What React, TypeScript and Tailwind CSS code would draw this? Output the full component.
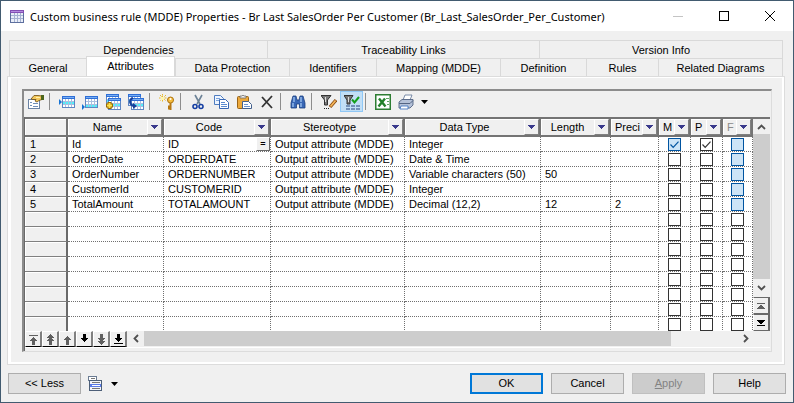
import React from 'react';

const attributes = [
  { name: 'Id', code: 'ID', type: 'Integer', length: '', precision: '', m: true, p: true },
  { name: 'OrderDate', code: 'ORDERDATE', type: 'Date & Time', length: '', precision: '', m: false, p: false },
  { name: 'OrderNumber', code: 'ORDERNUMBER', type: 'Variable characters (50)', length: '50', precision: '', m: false, p: false },
  { name: 'CustomerId', code: 'CUSTOMERID', type: 'Integer', length: '', precision: '', m: false, p: false },
  { name: 'TotalAmount', code: 'TOTALAMOUNT', type: 'Decimal (12,2)', length: '12', precision: '2', m: false, p: false },
];
const emptyRows = [6, 7, 8, 9, 10, 11, 12, 13];

const cellBase = 'h-[15px] overflow-hidden whitespace-nowrap border-r border-b border-dotted border-[#707070]';
const cell = `${cellBase} p-0 pl-1`;
const checkCell = `${cellBase} px-1 pt-px pb-0`;
const rowHead =
  'h-[15px] border-r-2 border-b border-r-[#696969] border-b-[#808080] bg-[#f0f0f0] p-0 pl-[5px] text-left font-normal shadow-[inset_1px_1px_0_#fff]';

function Icon({ label, children }: { label: string; children: React.ReactNode }) {
  return (
    <svg width="16" height="16" viewBox="0 0 16 16" role="img" aria-label={label} className="shrink-0">
      {children}
    </svg>
  );
}

function Table({ x, y, row }: { x: number; y: number; row: number }) {
  return (
    <g transform={`translate(${x} ${y})`} shapeRendering="crispEdges">
      <rect width="13" height="12" fill="#5f86c2" />
      <rect width="13" height="3" fill="#2f6fd6" />
      <rect x="1" y="1" width="11" height="1" fill="#76aef5" />
      {[0, 1, 2].map((r) =>
        [0, 1, 2, 3].map((c) => (
          <rect key={`${r}-${c}`} x={1 + c * 3} y={3 + r * 3} width="2" height="2" fill={r === row ? '#4ff0fa' : '#fff'} />
        )),
      )}
      <path d="M3.5 3v8M6.5 3v8M9.5 3v8M1 5.5h11M1 8.5h11" stroke="#a9bfdf" />
    </g>
  );
}

function ToolButton({ label, active, children }: { label: string; active?: boolean; children: React.ReactNode }) {
  return (
    <button
      type="button"
      aria-pressed={active}
      className={`flex h-[21px] w-[23px] items-center justify-center ${active ? 'border border-[#90c8f6] bg-[#c2dff6]' : ''}`}
    >
      <Icon label={label}>{children}</Icon>
    </button>
  );
}

function Separator() {
  return <div className="h-[21px] w-2 py-[2px] pl-[2px]"><div className="h-full w-px bg-[#8d8d8d]" /></div>;
}

function HeaderCell({ label, muted, narrow }: { label: string; muted?: boolean; narrow?: boolean }) {
  return (
    <th scope="col" className="h-5 border-y-2 border-r-2 border-[#747474] bg-[#f0f0f0] p-0 font-normal shadow-[inset_1px_1px_0_#fff]">
      <div className="flex h-4 items-center overflow-hidden">
        <span className={`flex-1 overflow-hidden whitespace-nowrap ${narrow ? 'pl-1 text-left' : 'text-center'} ${muted ? 'text-[#8a8a8a]' : ''}`}>
          {label}
        </span>
        <button
          type="button"
          aria-label={`Filter ${label}`}
          className="flex h-4 w-[15px] shrink-0 items-center justify-center border border-t-white border-r-[#808080] border-b-[#808080] border-l-white bg-[#f0f0f0]"
        >
          <svg width="7" height="4" viewBox="0 0 7 4" shapeRendering="crispEdges">
            <path d="M0 0h7v1H6v1H5v1H4v1H3V3H2V2H1V1H0z" fill="#3a3a8c" />
          </svg>
        </button>
      </div>
    </th>
  );
}

function Check({ label, checked, blue }: { label: string; checked?: boolean; blue?: boolean }) {
  return (
    <span className="relative mx-auto block h-[13px] w-[13px]">
      <input
        type="checkbox"
        aria-label={label}
        defaultChecked={checked}
        className={`block h-[13px] w-[13px] appearance-none border ${blue ? 'border-[#0054a0] bg-[#cce4f7]' : 'border-[#333] bg-white'}`}
      />
      {checked && (
        <svg width="13" height="13" viewBox="0 0 13 13" className="pointer-events-none absolute inset-0">
          <path d="M2.5 6.5l2.7 2.8 5.3-5.6" fill="none" stroke={blue ? '#0054a0' : '#333'} strokeWidth="1.2" />
        </svg>
      )}
    </span>
  );
}

function NavButton({ label, d, dark }: { label: string; d: string; dark?: boolean }) {
  return (
    <button
      type="button"
      aria-label={label}
      className="flex h-[16px] w-[17px] items-center justify-center border-t border-r-2 border-b border-l border-t-white border-r-[#808080] border-b-black border-l-white bg-[#f0f0f0]"
    >
      <svg width="11" height="11" viewBox="0 0 11 11" shapeRendering="crispEdges">
        <path d={d} fill={dark ? '#000' : '#606060'} />
      </svg>
    </button>
  );
}

function PageButton({ label, d, dark }: { label: string; d: string; dark?: boolean }) {
  return (
    <button
      type="button"
      aria-label={label}
      className="flex h-[17px] items-center justify-center border-t border-r-2 border-b border-l border-t-[#696969] border-r-[#696969] border-b-[#696969] border-l-white bg-[#f0f0f0]"
    >
      <svg width="8" height="6" viewBox="0 0 8 6" shapeRendering="crispEdges">
        <path d={d} fill={dark ? '#000' : '#606060'} />
      </svg>
    </button>
  );
}

function TabButton({ label, active }: { label: string; active?: boolean }) {
  return (
    <button
      type="button"
      role="tab"
      aria-selected={!!active}
      className={`whitespace-nowrap border-t border-l border-[#d9d9d9] text-center ${
        active ? '-mt-[2px] -mb-px border-r bg-white pb-[2px]' : 'bg-[#f0f0f0] pt-[2px]'
      }`}
    >
      {label}
    </button>
  );
}

function DialogButton({ children, kind = 'normal' }: { children: React.ReactNode; kind?: 'normal' | 'primary' | 'disabled' }) {
  const look = {
    normal: 'border border-[#adadad] bg-[#e1e1e1]',
    primary: 'border-2 border-[#0078d7] bg-[#e1e1e1]',
    disabled: 'border border-[#bfbfbf] bg-[#cccccc] text-[#838383]',
  }[kind];
  return (
    <button type="button" disabled={kind === 'disabled'} className={`h-[21px] w-[73px] ${look}`}>
      {children}
    </button>
  );
}

export default function App() {
  return (
    <main className="flex min-h-screen flex-col border border-[#425b70] bg-[#f0f0f0] font-['Liberation_Sans',Arial,sans-serif] text-[11px] leading-[13px] text-black">
      <header className="flex h-[30px] items-center bg-white pl-[9px]">
        <svg width="14" height="13" viewBox="0 0 14 13" shapeRendering="crispEdges" className="shrink-0" aria-hidden="true">
          <rect width="14" height="13" fill="#5d6f9e" />
          <rect width="14" height="3" fill="#8350b4" />
          <rect x="1" y="1" width="12" height="1" fill="#b48ae0" />
          <rect x="1" y="3" width="12" height="9" fill="#e9eef8" />
          <path d="M4.5 3v9M7.5 3v9M10.5 3v9M1 5.5h12M1 8.5h12" stroke="#a5b2d2" />
        </svg>
        <h1 className="ml-[6px] flex-1 whitespace-nowrap font-['Noto_Sans','Open_Sans',sans-serif] text-[11px]">
          Custom business rule (MDDE) Properties - Br Last SalesOrder Per Customer (Br_Last_SalesOrder_Per_Customer)
        </h1>
        <div className="flex shrink-0">
          <button type="button" aria-label="Minimize" className="flex h-[29px] w-[46px] items-center justify-center">
            <svg width="10" height="10"><path d="M0 5.5h10" stroke="#c4c4c4" /></svg>
          </button>
          <button type="button" aria-label="Maximize" className="flex h-[29px] w-[46px] items-center justify-center">
            <svg width="10" height="10"><rect x=".5" y=".5" width="9" height="9" fill="none" stroke="#000" /></svg>
          </button>
          <button type="button" aria-label="Close" className="flex h-[29px] w-[46px] items-center justify-center">
            <svg width="10" height="10"><path d="M0 0l10 10M10 0L0 10" stroke="#000" /></svg>
          </button>
        </div>
      </header>

      <div role="tablist" className="mt-[9px] mr-[10px] ml-2 flex flex-col border-r border-[#d9d9d9]">
        <div className="grid h-[18px] grid-cols-[258fr_272fr_243fr]">
          <TabButton label="Dependencies" />
          <TabButton label="Traceability Links" />
          <TabButton label="Version Info" />
        </div>
        <div className="grid h-[18px] grid-cols-[77fr_89fr_114fr_87fr_124fr_86fr_72fr_124fr]">
          <TabButton label="General" />
          <TabButton label="Attributes" active />
          <TabButton label="Data Protection" />
          <TabButton label="Identifiers" />
          <TabButton label="Mapping (MDDE)" />
          <TabButton label="Definition" />
          <TabButton label="Rules" />
          <TabButton label="Related Diagrams" />
        </div>
      </div>

      <section className="mr-2 ml-[6px] flex flex-1 flex-col border border-[#dcdcdc] bg-white p-[2px] pt-px pl-[3px]">
        <div className="flex flex-1 flex-col bg-[#f0f0f0] pt-[11px] pr-[10px] pb-[10px] pl-[11px]">
          <div className="flex flex-1 flex-col border-t-2 border-r border-b border-l-2 border-t-[#8c8c8c] border-r-[#dcdcdc] border-b-[#dcdcdc] border-l-[#8c8c8c]">
            <div role="toolbar" className="flex h-[26px] items-start">
              <ToolButton label="Properties">
                <rect x=".5" y="5.5" width="11" height="9" fill="#fff" stroke="#6b84a5" />
                <path d="M2 8.500h2M5 9.500h5M2 11.500h2M5 12.500h5" stroke="#6f8fb8" />
                <path d="M3 5l3-3.500h4l4 .5v3.500l-3 1-2 1.500-2-1 1-1.500H5z" fill="#f4c95c" stroke="#6b4b12" strokeWidth=".8" />
                <path d="M13 1h3v5h-3z" fill="#4d661c" />
                <path d="M8 3.500h4" stroke="#fff0b0" />
              </ToolButton>
              <Separator />
              <ToolButton label="Insert a Row">
                <Table x={3} y={2} row={1} />
                <path d="M0 5l3 3-3 3z" fill="#1673d4" />
              </ToolButton>
              <ToolButton label="Add a Row">
                <Table x={3} y={2} row={2} />
                <path d="M0 10l3 3-3 3z" fill="#1673d4" />
              </ToolButton>
              <ToolButton label="Add Objects">
                <Table x={1} y={0} row={1} />
                <Table x={3} y={4} row={1} />
                <path d="M4.500 8v7M1 11.500h7" stroke="#9a6d00" strokeWidth="4" />
                <path d="M4.500 9v5M2 11.500h5" stroke="#ffe34a" strokeWidth="2" />
              </ToolButton>
              <ToolButton label="Replace Objects">
                <Table x={0} y={0} row={1} />
                <Table x={3} y={4} row={1} />
                <path d="M5 4C1 5 1 11 6 12" fill="none" stroke="#153f9b" strokeWidth="2" />
                <path d="M5 9l4 3-4 3z" fill="#153f9b" />
              </ToolButton>
              <Separator />
              <ToolButton label="Create Key">
                <path d="M3.500 0v8M0 4h8M1 1l6 6M7 1L1 7" stroke="#e8b92c" strokeDasharray="1.500 .5" />
                <rect x="2" y="3" width="3" height="3" fill="#fff6b0" />
                <path d="M11.500 9v7M12 12.500h-3M12 14.500h-3" stroke="#b87913" strokeWidth="2" />
                <circle cx="11.500" cy="6" r="3" fill="#f6bd3c" stroke="#ad7310" />
                <circle cx="11.500" cy="5" r="1" fill="#fff" />
              </ToolButton>
              <Separator />
              <ToolButton label="Cut">
                <path d="M5 1l5 9M12 1l-5 9" stroke="#6d8397" strokeWidth="1.600" />
                <circle cx="5" cy="12.500" r="2" fill="none" stroke="#163fa3" strokeWidth="1.600" />
                <circle cx="11" cy="12.500" r="2" fill="none" stroke="#163fa3" strokeWidth="1.600" />
              </ToolButton>
              <ToolButton label="Copy">
                <path d="M1.500 1.500h6l3 3v6h-9z" fill="#eef5ff" stroke="#4f7dc0" />
                <path d="M3 4.500h4M3 6.500h4" stroke="#7aa3db" />
                <path d="M6.500 5.500h6l3 3v6h-9z" fill="#fff" stroke="#3766b3" />
                <path d="M8 8.500h4M8 10.500h6M8 12.500h6" stroke="#5b8bd0" />
              </ToolButton>
              <ToolButton label="Paste">
                <rect x="1.500" y="2.500" width="11" height="12" rx="1" fill="#eda93b" stroke="#9a6416" />
                <path d="M4 4V2h2l1-1 1 1h2v2z" fill="#eee" stroke="#6d6d6d" strokeWidth=".8" />
                <path d="M6.500 7.500h6l3 3v4h-9z" fill="#fff" stroke="#44618d" />
                <path d="M8 10.500h4M8 12.500h6" stroke="#6c93cd" />
              </ToolButton>
              <ToolButton label="Delete">
                <path d="M3 3l10 11M13 2L3 13" fill="none" stroke="#333" strokeWidth="1.800" />
              </ToolButton>
              <Separator />
              <ToolButton label="Find">
                <path d="M3 2h3l1 4h2l1-4h3l2 7v5H9.500v-4h-3v4H1V9z" fill="#3866b5" stroke="#1b3f80" strokeWidth=".8" />
                <path d="M4 3v5M11 3v5M3 9v4M11 9v4" stroke="#a9cdf7" strokeWidth="1.200" />
              </ToolButton>
              <Separator />
              <ToolButton label="Customize Filter">
                <path d="M0 1.500h10L6.500 6v5h-3V6z" fill="#777" stroke="#333" />
                <path d="M4.500 3v5" stroke="#ddd" />
                <path d="M9 13l6-7" stroke="#8a4b13" strokeWidth="3.400" />
                <path d="M9.500 12.500l5-6" stroke="#f4b65a" strokeWidth="1.800" />
                <path d="M3 14.500h1M5 14.500h1M7 14.500h1" stroke="#222" />
              </ToolButton>
              <ToolButton label="Enable Filter" active>
                <path d="M0 1.500h9L6 6v4H3V6z" fill="#777" stroke="#333" />
                <path d="M4.500 3v5" stroke="#ddd" />
                <path d="M8 5.500l2.500 3L15 3" fill="none" stroke="#13a01b" strokeWidth="2" />
                <path d="M2 12h4M7 12h4M12 12h4M2 15h4M7 15h4M12 15h4" stroke="#27457a" strokeWidth="1.200" />
              </ToolButton>
              <Separator />
              <ToolButton label="Export to Excel">
                <rect x=".75" y=".75" width="14.500" height="14.500" fill="#fff" stroke="#2d7d32" strokeWidth="1.500" />
                <path d="M4 4.500l6.500 8M10 4.500l-6.500 8" stroke="#23802b" strokeWidth="2.400" />
                <path d="M11 4.500h3M12 7.500h2M12 10.500h2" stroke="#5ba35f" />
              </ToolButton>
              <ToolButton label="Print">
                <path d="M5 6l2-5h7l-2 5z" fill="#fff" stroke="#6b7f9e" strokeWidth=".9" />
                <path d="M1 8l3-2.500h11V11l-3 3H1z" fill="#b4c1d8" stroke="#536483" strokeWidth=".9" />
                <path d="M1 9.500h11l3-3" fill="none" stroke="#536483" />
                <path d="M3 12h7v3H2z" fill="#fff" stroke="#4679c4" strokeWidth=".9" />
              </ToolButton>
              <button type="button" aria-label="Print options" className="flex h-[21px] w-[15px] items-center justify-center">
                <svg width="7" height="4"><path d="M0 0h7L3.500 4z" fill="#000" /></svg>
              </button>
            </div>

            <div className="flex flex-1 flex-col border-l border-[#696969] pr-px">
              <div className="flex">
                <div className="h-[214px] min-w-0 flex-1 overflow-hidden bg-white">
                  <table className="w-full table-fixed border-separate border-spacing-0">
                    <colgroup>
                      <col className="w-[43px]" />
                      <col className="w-[96px]" />
                      <col className="w-[107px]" />
                      <col className="w-[134px]" />
                      <col className="w-[136px]" />
                      <col className="w-[70px]" />
                      <col className="w-[48px]" />
                      <col className="w-[32px]" />
                      <col className="w-[32px]" />
                      <col />
                    </colgroup>
                    <thead>
                      <tr>
                        <th className="h-5 border-y-2 border-r-2 border-[#747474] bg-[#f0f0f0] p-0 shadow-[inset_1px_1px_0_#fff]" />
                        <HeaderCell label="Name" />
                        <HeaderCell label="Code" />
                        <HeaderCell label="Stereotype" />
                        <HeaderCell label="Data Type" />
                        <HeaderCell label="Length" />
                        <HeaderCell label="Preci" narrow />
                        <HeaderCell label="M" narrow />
                        <HeaderCell label="P" narrow />
                        <HeaderCell label="F" narrow muted />
                      </tr>
                    </thead>
                    <tbody>
                      {attributes.map((a, i) => (
                        <tr key={a.name}>
                          <th scope="row" className={rowHead}>{i + 1}</th>
                          <td className={cell}>{a.name}</td>
                          <td className={cell}>
                            <div className="flex h-[14px] items-center justify-between">
                              {a.code}
                              {i === 0 && (
                                <button
                                  type="button"
                                  className="h-[14px] w-[14px] border border-t-white border-r-[#696969] border-b-[#696969] border-l-white bg-[#f0f0f0] text-[9px] leading-[11px] font-bold"
                                >
                                  =
                                </button>
                              )}
                            </div>
                          </td>
                          <td className={cell}>Output attribute (MDDE)</td>
                          <td className={cell}>{a.type}</td>
                          <td className={cell}>{a.length}</td>
                          <td className={cell}>{a.precision}</td>
                          <td className={checkCell}><Check label={`Mandatory ${a.name}`} checked={a.m} blue={a.m} /></td>
                          <td className={checkCell}><Check label={`Primary ${a.name}`} checked={a.p} /></td>
                          <td className={checkCell}><Check label={`Foreign ${a.name}`} blue /></td>
                        </tr>
                      ))}
                      {emptyRows.map((n) => (
                        <tr key={n}>
                          <th scope="row" className={rowHead} />
                          <td className={cell} />
                          <td className={cell} />
                          <td className={cell} />
                          <td className={cell} />
                          <td className={cell} />
                          <td className={cell} />
                          <td className={checkCell}><Check label={`Mandatory row ${n}`} /></td>
                          <td className={checkCell}><Check label={`Primary row ${n}`} /></td>
                          <td className={checkCell}><Check label={`Foreign row ${n}`} /></td>
                        </tr>
                      ))}
                    </tbody>
                  </table>
                </div>
                <div className="flex w-[17px] flex-col border-t-2 border-[#747474] bg-[#f0f0f0]">
                  <button type="button" aria-label="Scroll up" className="flex h-[15px] items-center justify-center">
                    <svg width="9" height="6"><path d="M1 5l3.500-3.500L8 5" fill="none" stroke="#505050" strokeWidth="1.800" /></svg>
                  </button>
                  <div className="flex-1 bg-[#cdcdcd]" />
                  <button type="button" aria-label="Scroll down" className="flex h-[18px] items-center justify-center">
                    <svg width="9" height="6"><path d="M1 1l3.500 3.500L8 1" fill="none" stroke="#505050" strokeWidth="1.800" /></svg>
                  </button>
                  <PageButton label="First page" d="M0 0h8v1H0zM3 2h2v1h1v1h1v1h1v1H0V5h1V4h1V3h1z" />
                  <PageButton label="Last page" d="M0 0h8v1H7v1H6v1H5v1H3V3H2V2H1V1H0zM0 5h8v1H0z" dark />
                </div>
              </div>
              <div className="flex h-4 bg-[#f0f0f0]">
                <NavButton label="Move to top" d="M1 1h9v1H1zM5 3h1v1h1v1h1v1h1v1H7v4H4V7H2V6h1V5h1V4h1z" />
                <NavButton label="Move up a page" d="M5 0h1v1h1v1h1v1h1v1H7v1h1v1h1v1H7v4H4V7H2V6h1V5h1V4H2V3h1V2h1V1h1z" />
                <NavButton label="Move up" d="M5 2h1v1h1v1h1v1h1v1H7v5H4V6H2V5h1V4h1V3h1z" />
                <NavButton label="Move down" d="M4 0h3v4h2v1H8v1H7v1H6v1H5V7H4V6H3V5H2V4h2z" dark />
                <NavButton label="Move down a page" d="M4 0h3v4h2v1H8v1H7v1h2v1H8v1H7v1H6v1H5v-1H4V9H3V8H2V7h2V6H3V5H2V4h2z" />
                <NavButton label="Move to bottom" d="M4 0h3v4h2v1H8v1H7v1H6v1H5V7H4V6H3V5H2V4h2zM1 9h9v1H1z" dark />
                <button type="button" aria-label="Scroll left" className="flex h-[15px] w-[17px] items-center justify-center">
                  <svg width="6" height="9"><path d="M5 1L1.500 4.500 5 8" fill="none" stroke="#505050" strokeWidth="1.800" /></svg>
                </button>
                <div className="h-[15px] flex-1 bg-[#cdcdcd]" />
                <div className="flex w-[99px] justify-end pr-4">
                  <button type="button" aria-label="Scroll right" className="flex h-[15px] w-[17px] items-center justify-center">
                    <svg width="6" height="9"><path d="M1 1l3.500 3.500L1 8" fill="none" stroke="#505050" strokeWidth="1.800" /></svg>
                  </button>
                </div>
              </div>
              <div className="h-px bg-white" />
            </div>
          </div>
        </div>
      </section>

      <footer className="flex items-center px-[7px] pt-2 pb-2">
        <DialogButton>&lt;&lt; Less</DialogButton>
        <button type="button" aria-label="Menu" className="ml-[7px] flex items-center gap-2">
          <svg width="15" height="15" viewBox="0 0 15 15" shapeRendering="crispEdges">
            <path d="M.5.500h8v4H.5z" fill="#fff" stroke="#6b7c93" />
            <path d="M1.500 4.500h12v10h-12z" fill="#f4f6fa" stroke="#4d5f78" />
            <path d="M3 2.500h4M4 6.500h8M4 12.500h8" stroke="#777" />
            <rect x="2" y="8" width="11" height="3" fill="#5b7be8" />
            <path d="M4 9.500h8" stroke="#fff" />
          </svg>
          <svg width="7" height="4"><path d="M0 0h7L3.500 4z" fill="#000" /></svg>
        </button>
        <div className="ml-auto flex gap-2">
          <DialogButton kind="primary">OK</DialogButton>
          <DialogButton>Cancel</DialogButton>
          <DialogButton kind="disabled"><u>A</u>pply</DialogButton>
          <DialogButton>Help</DialogButton>
        </div>
      </footer>
    </main>
  );
}
